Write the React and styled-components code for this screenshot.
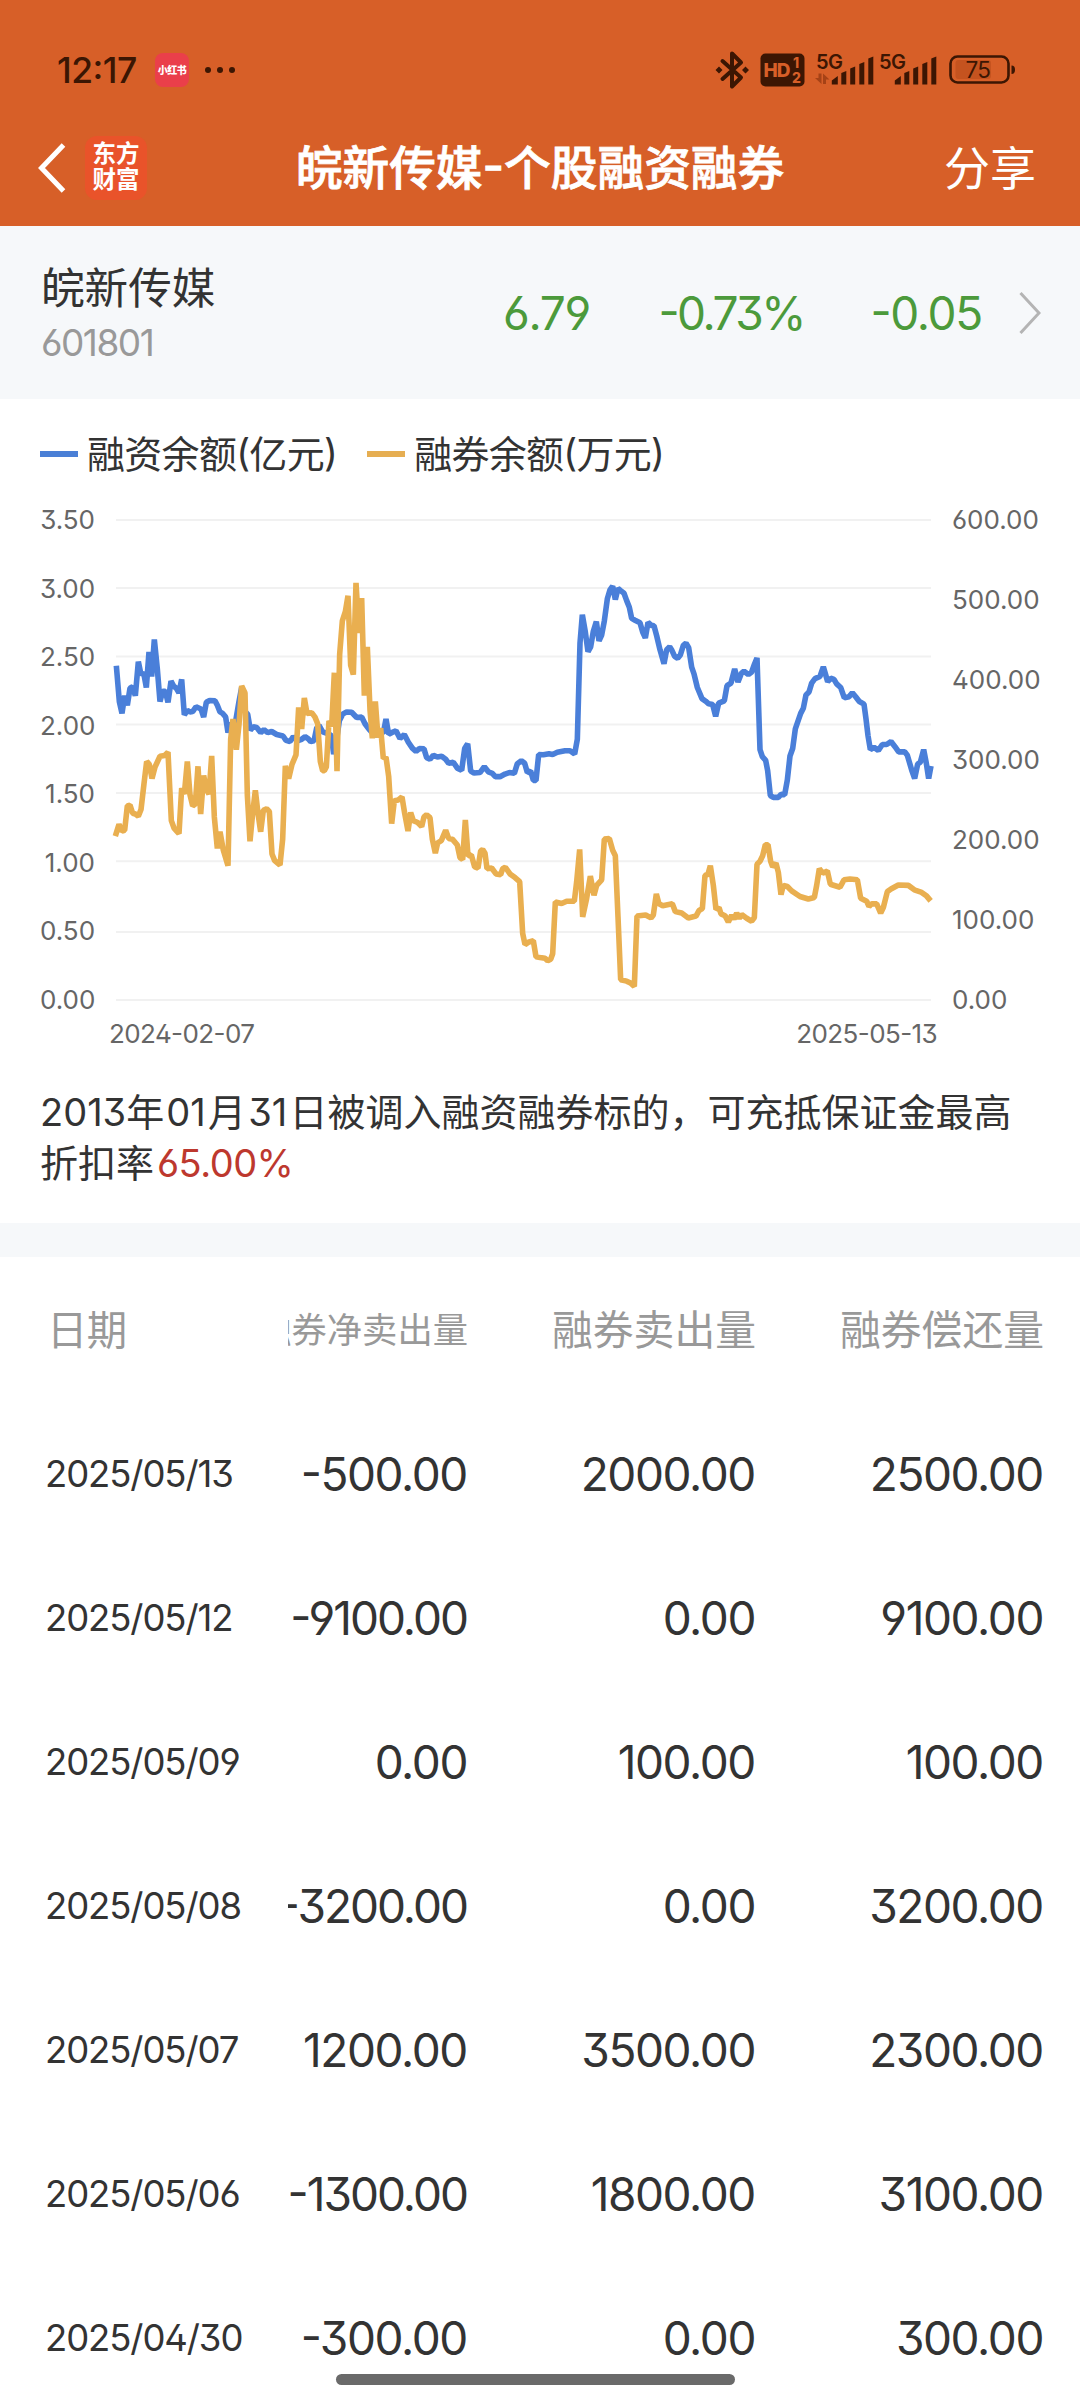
import styled, { createGlobalStyle } from "styled-components";

const GlobalStyle = createGlobalStyle`
  * {
    box-sizing: border-box;
  }
  body {
    margin: 0;
    background-color: #fff;
    color: #333;
    font-family: Inter, "Noto Sans CJK SC", sans-serif;
    font-feature-settings: "ss01", "cv09", "case";
  }
  svg {
    display: block;
    flex: none;
  }
`;
const Page = styled.div`
  width: 1080px;
  height: 2400px;
  overflow: hidden;
  position: relative;
`;
const Header = styled.header`
  height: 226px;
  background-color: #d75f28;
`;
const StatusBar = styled.div`
  height: 120px;
  padding: 20px 64px 0 57px;
  display: flex;
  align-items: center;
  color: #3c1603;
`;
const Time = styled.span`
  width: 98px;
  font-size: 35.5px;
  font-weight: 500;
  letter-spacing: -0.5px;
`;
const RedApp = styled.span`
  width: 34px;
  height: 34px;
  border-radius: 8px;
  background-color: #ea3f4a;
  color: #fff;
  font-size: 10px;
  font-weight: 900;
  line-height: 34px;
  letter-spacing: -0.5px;
  text-align: center;
  white-space: nowrap;
`;
const Dots = styled.div`
  margin-left: 16px;
  display: flex;
  gap: 6px;
  i {
    width: 6px;
    height: 6px;
    border-radius: 50%;
    background-color: #3c1603;
  }
`;
const StatusIcons = styled.div`
  margin-left: auto;
  display: flex;
  text {
    font-family: Inter, sans-serif;
  }
`;
const NavBar = styled.div`
  height: 106px;
  padding: 0 44px 10px 38px;
  display: grid;
  grid-template-columns: 220px 1fr 214px;
  align-items: center;
  color: #fff;
`;
const NavLeft = styled.div`
  display: flex;
  align-items: center;
  gap: 19px;
`;
const Logo = styled.div`
  width: 62px;
  height: 64px;
  padding-top: 5px;
  border-radius: 12px;
  background-color: #e9532a;
  font-size: 23.5px;
  font-weight: 700;
  line-height: 26px;
  text-align: center;
`;
const Title = styled.h1`
  margin: 0;
  font-size: 46.7px;
  font-weight: 500;
  line-height: 60px;
  text-align: center;
  white-space: nowrap;
  -webkit-text-stroke: 0.8px #fff;
`;
const Share = styled.span`
  font-size: 46px;
  line-height: 60px;
  text-align: right;
`;
const Quote = styled.section`
  height: 173px;
  padding: 0 39px 0 41px;
  background-color: #f6f8fa;
  display: grid;
  grid-template-columns: 349px 200px 214px 178px 1fr;
  align-items: center;
`;
const StockName = styled.div`
  margin-top: 7px;
  font-size: 43.6px;
  line-height: 54px;
`;
const StockCode = styled.div`
  font-size: 37px;
  line-height: 54px;
  letter-spacing: -1.5px;
  color: #999;
`;
const QuoteValue = styled.span`
  font-size: 46px;
  text-align: right;
  letter-spacing: ${(props) => (props.tight ? "-2.5px" : "-1.3px")};
  color: #4c9a3b;
`;
const ChevronCell = styled.div`
  display: flex;
  justify-content: flex-end;
`;
const ChartSection = styled.section`
  height: 661px;
  padding: 28px 40px 0;
`;
const Legend = styled.div`
  height: 54px;
  display: flex;
  gap: 30px;
`;
const LegendItem = styled.div`
  display: flex;
  align-items: center;
  font-size: 38px;
  line-height: 54px;
  letter-spacing: -0.7px;
  &::before {
    content: "";
    width: 38px;
    height: 6px;
    margin-right: 9px;
    background-color: ${(props) => props.color};
  }
`;
const ChartBody = styled.div`
  margin-top: 23px;
  display: grid;
  grid-template-columns: 55px 815px 1fr;
  column-gap: 21px;
`;
const Axis = styled.div`
  height: 512px;
  display: flex;
  flex-direction: column;
  justify-content: space-between;
  text-align: ${(props) => props.align};
  font-size: 26px;
  line-height: 32px;
  color: #666;
`;
const Plot = styled.svg`
  margin-top: 16px;
  overflow: visible;
`;
const Dates = styled.div`
  margin-top: 2px;
  padding: 0 103px 0 69px;
  display: flex;
  justify-content: space-between;
  font-size: 26px;
  line-height: 32px;
  letter-spacing: -0.6px;
  color: #666;
`;
const Notice = styled.p`
  height: 163px;
  margin: 0;
  padding: 27px 40px 0;
  font-size: 38px;
  line-height: 51px;
  em {
    margin-left: 3px;
    font-style: normal;
    letter-spacing: -0.5px;
    color: #bd382e;
  }
`;
const Num = styled.span`
  margin: 0 2.2px;
`;
const Divider = styled.div`
  height: 34px;
  background-color: #f6f8fa;
`;
const Row = styled.div`
  height: 144px;
  display: grid;
  grid-template-columns: 288px 180px 288px 288px;
  align-items: center;
`;
const HeadRow = styled(Row)`
  height: 145px;
  padding-bottom: 5px;
`;
const DateCell = styled.span`
  padding-left: 45px;
  font-size: 36.5px;
  letter-spacing: -1.1px;
`;
const Cell = styled.span`
  display: flex;
  justify-content: flex-end;
  overflow: hidden;
  white-space: nowrap;
  padding-right: 1px;
  font-size: 46px;
  letter-spacing: ${(props) => (props.long ? "-2px" : "-1.4px")};
`;
const HeadCell = styled(Cell)`
  padding-right: 0;
  font-size: ${(props) => (props.small ? "35.3px" : "40.8px")};
  letter-spacing: 0;
  color: #999;
`;
const HeadDate = styled(DateCell)`
  padding-left: 47px;
  font-size: 40.4px;
  letter-spacing: -0.6px;
  color: #999;
`;
const HomeIndicator = styled.div`
  position: absolute;
  left: 336px;
  bottom: 15px;
  width: 399px;
  height: 11px;
  border-radius: 6px;
  background-color: #6a6a6a;
`;

const rows = [
  ["2025/05/13", "-500.00", "2000.00", "2500.00"],
  ["2025/05/12", "-9100.00", "0.00", "9100.00"],
  ["2025/05/09", "0.00", "100.00", "100.00"],
  ["2025/05/08", "-3200.00", "0.00", "3200.00"],
  ["2025/05/07", "1200.00", "3500.00", "2300.00"],
  ["2025/05/06", "-1300.00", "1800.00", "3100.00"],
  ["2025/04/30", "-300.00", "0.00", "300.00"],
];
const leftTicks = [3.5, 3, 2.5, 2, 1.5, 1, 0.5, 0];
const rightTicks = [600, 500, 400, 300, 200, 100, 0];
const gridLines = [107, 291, 476, 660, 845, 1030, 1221, 1405];

// each series is kept in three strips: [x offset, points inside the strip]
const financing = [
  [
    0,
    "349,501 358,598 366,630 374,582 382,608 390,562 398,558 406,582 415,490 423,525 431,520 439,560 447,464 455,530 463,430 472,510 480,598 488,570 496,570 504,600 513,543 521,556 529,562 537,574 545,538 553,634 562,622 570,626 578,625 588,612 603,618 611,640 619,600 629,595 645,596 652,608 660,626 668,630 677,640 684,682 692,655 700,690 709,640 717,598 725,560 735,625 743,632 751,675 760,666 770,668 782,682 792,674 803,682 815,679 830,687 849,691 858,703 870,706 880,693 892,704 905,700 915,693 925,699 932,706 942,704 950,670 957,662 968,680 985,685 994,690 1001,740 1010,700 1018,650 1028,632 1040,626 1055,627 1070,641 1085,640 1095,658 1108,674 1125,690 1140,680 1150,683",
  ],
  [
    1140,
    "18,645 26,686 35,682 48,677 60,698 73,687 85,708 97,724 108,733 118,725 132,726 140,750 150,754 160,743 172,748 185,746 197,754 206,765 220,762 232,778 245,784 254,725 263,712 272,786 282,791 300,790 313,774 325,788 337,792 346,801 360,801 375,794 388,790 403,792 412,766 424,758 434,765 442,790 452,786 460,811 468,811 476,741 490,742 507,739 518,741 532,735 555,731 570,731 584,740 592,700 600,440 607,363 616,410 624,463 632,450 640,408 649,382 657,434 665,418 673,380 682,320 690,296 698,286 706,322 714,292 722,298 732,305 740,325 748,343 755,373 765,378 780,385 788,410 796,426 804,384 814,392 822,393 830,420 840,458 852,496 860,458 869,450 876,460 884,476 893,481 901,472 910,446 918,440 926,452 935,505 942,523 952,560 966,590 977,597 986,604 998,606 1007,638 1016,602 1033,596 1041,555 1053,548",
  ],
  [
    2100,
    "104,510 114,545 124,522 132,516 145,525 155,518 162,500 171,480 180,728 187,747 197,757 203,785 211,852 220,857 235,857 243,849 254,850 262,810 270,745 278,725 286,672 302,630 310,616 318,580 327,572 335,548 345,536 360,530 370,504 383,544 392,535 402,538 410,550 422,560 433,588 447,585 457,574 467,585 478,598 492,605 498,645 504,690 511,728 522,722 535,730 547,714 560,714 573,706 585,720 596,734 614,734 622,743 635,783 644,806 653,767 661,762 671,728 679,765 686,806 693,772",
  ],
];
const lending = [
  [
    0,
    "346,962 357,930 366,948 374,946 382,880 390,878 398,900 406,902 415,908 423,890 432,820 440,760 448,768 456,806 465,775 480,746 494,744 504,735 514,920 522,940 530,948 537,955 545,832 553,848 562,760 570,850 578,880 586,875 594,773 602,902 611,798 619,835 627,848 635,745 643,910 652,995 660,950 670,1000 684,1042 692,700 699,645 709,728 717,660 725,556 735,575 742,850 750,976 758,900 766,838 774,900 782,950 790,892 800,888 808,895 816,1010 824,1028 840,1040 848,970 856,772 866,806 876,768 888,742 896,614 905,672 913,588 921,630 935,628 945,640 953,658 961,760 968,785 973,785 979,775 987,650 995,665 1003,520 1011,786 1019,470 1027,380 1036,355 1044,312 1052,500 1060,525 1068,277 1077,413 1085,318 1093,582 1102,450 1110,620 1117,697 1126,598 1134,695 1142,670 1150,752 1158,748 1166,800",
  ],
  [
    1140,
    "35,928 43,866 55,864 66,856 74,900 84,948 92,898 100,920 113,925 125,936 132,910 140,904 150,912 157,970 166,1008 173,980 184,974 197,946 206,968 217,970 232,986 240,1020 248,1025 256,918 264,1015 274,1013 284,1045 294,1048 302,1002 308,998 315,1008 321,1050 335,1048 348,1064 362,1066 368,1050 376,1046 390,1064 405,1074 419,1085 428,1225 435,1255 447,1248 460,1245 468,1288 480,1290 495,1292 503,1299 512,1295 518,1280 526,1140 545,1144 560,1138 583,1138 590,1085 599,998 608,1180 620,1130 631,1070 642,1122 650,1095 665,1080 673,970 688,968 698,1000 706,1015 714,1180 722,1350 740,1354 753,1360 763,1368 771,1178 797,1175 813,1183 820,1175 829,1118 837,1145 848,1150 877,1145 886,1166 905,1170 925,1183 948,1178 957,1163 967,1158 975,1068 984,1065 991,1042 1000,1095 1008,1160",
  ],
  [
    2100,
    "57,1155 63,1172 75,1177 85,1194 95,1176 102,1186 110,1170 118,1184 125,1174 140,1184 155,1192 163,1182 171,1038 180,1030 188,1015 196,985 204,985 212,1030 218,1045 228,1035 235,1060 243,1120 250,1095 262,1098 275,1110 300,1125 325,1132 343,1128 350,1095 358,1050 368,1062 382,1056 391,1092 420,1100 432,1080 450,1078 472,1080 482,1130 500,1138 507,1152 515,1145 530,1145 542,1170 550,1155 562,1112 573,1105 595,1094 625,1095 645,1108 665,1114 680,1124 692,1137",
  ],
];
const toPoints = (strips) =>
  strips
    .map(([offset, points]) =>
      points
        .split(" ")
        .map((point) => {
          const [x, y] = point.split(",").map(Number);
          return `${x + offset},${y}`;
        })
        .join(" ")
    )
    .join(" ");

function Series({ strips, color }) {
  return (
    <polyline
      points={toPoints(strips)}
      fill="none"
      stroke={color}
      strokeWidth="5.6"
      strokeLinejoin="bevel"
      vectorEffect="non-scaling-stroke"
    />
  );
}

function Signal({ arrows }) {
  return (
    <svg width={63} height="40" viewBox="814 50 63 40" fill="#3c1603">
      <text x="816" y="68.5" fontSize="20" fontWeight="600" letterSpacing="-0.6">
        5G
      </text>
      {arrows && (
        <g fill="#a64216">
          <path d="M818.5 73.500h3V84L815 78h3.500z" />
          <path d="M826 84h-3V73.500l6.500 6H826z" />
        </g>
      )}
      <path d="M831.800 84.500v-4l6-4.500v8.500z" />
      <path d="M841.300 84.500V73l5-2v13.500z" />
      <path d="M850.200 84.500V68.500l5-2v18z" />
      <path d="M859.300 84.500V64l5-2v22.500z" />
      <path d="M868.300 84.500V58.500l5-2v28z" />
    </svg>
  );
}

function App() {
  return (
    <Page>
      <GlobalStyle />
      <Header>
        <StatusBar>
          <Time>12:17</Time>
          <RedApp>小红书</RedApp>
          <Dots>
            <i />
            <i />
            <i />
          </Dots>
          <StatusIcons>
            <svg width="45" height="40" viewBox="715 50 45 40" fill="#3c1603">
              <path
                d="M722.500 61l18.500 16.500-9 9V53.500l9 9-18.500 16.500"
                fill="none"
                stroke="#3c1603"
                strokeWidth="4"
                strokeLinejoin="round"
                strokeLinecap="round"
              />
              <path d="M715.500 70l3.500-3.500 3.500 3.500-3.500 3.500zM742 70l3.500-3.500 3.500 3.500-3.500 3.500z" />
            </svg>
            <svg width="54" height="40" viewBox="760 50 54 40">
              <rect x="760.500" y="53.500" width="44" height="33" rx="5" fill="#3c1603" />
              <g fill="#d75f28" fontWeight="800">
                <text x="763.500" y="76.500" fontSize="19" letterSpacing="-1">
                  HD
                </text>
                <text x="793" y="68" fontSize="14">
                  1
                </text>
                <text x="792" y="83" fontSize="14">
                  2
                </text>
              </g>
            </svg>
            <Signal arrows />
            <Signal />
            <svg width="76" height="40" viewBox="940 50 76 40">
              <rect x="955.500" y="60" width="35.500" height="19" rx="3" fill="#c5531f" />
              <rect
                x="950.500"
                y="56.500"
                width="58"
                height="26"
                rx="7"
                fill="none"
                stroke="#3c1603"
                strokeWidth="2.600"
              />
              <path d="M1011.500 65.500q3.500 0 3.500 4.200t-3.500 4.200z" fill="#3c1603" />
              <text x="965.500" y="78" fontSize="22.500" fill="#3c1603" letterSpacing="-0.8">
                75
              </text>
            </svg>
          </StatusIcons>
        </StatusBar>
        <NavBar>
          <NavLeft>
            <svg width="28" height="50" viewBox="0 0 28 50">
              <path d="M25.500 2L3.500 25l22 23" fill="none" stroke="#fff" strokeWidth="5" />
            </svg>
            <Logo>
              东方
              <br />
              财富
            </Logo>
          </NavLeft>
          <Title>皖新传媒-个股融资融券</Title>
          <Share>分享</Share>
        </NavBar>
      </Header>
      <Quote>
        <div>
          <StockName>皖新传媒</StockName>
          <StockCode>601801</StockCode>
        </div>
        <QuoteValue>6.79</QuoteValue>
        <QuoteValue tight>-0.73%</QuoteValue>
        <QuoteValue>-0.05</QuoteValue>
        <ChevronCell>
          <svg width="22" height="44" viewBox="0 0 22 44">
            <path d="M1.500 2L20 22 1.500 42" fill="none" stroke="#b4b4b4" strokeWidth="3" />
          </svg>
        </ChevronCell>
      </Quote>
      <ChartSection>
        <Legend>
          <LegendItem color="#4a7fd6">融资余额(亿元)</LegendItem>
          <LegendItem color="#e6ae52">融券余额(万元)</LegendItem>
        </Legend>
        <ChartBody>
          <Axis align="right">
            {leftTicks.map((tick) => (
              <span key={tick}>{tick.toFixed(2)}</span>
            ))}
          </Axis>
          <Plot
            width="815"
            height="480"
            viewBox="348 107 2445 1298"
            preserveAspectRatio="none"
          >
            {gridLines.map((y) => (
              <line
                key={y}
                x1="348"
                x2="2793"
                y1={y}
                y2={y}
                stroke="#f1f1f1"
                strokeWidth="2"
                vectorEffect="non-scaling-stroke"
              />
            ))}
            <Series strips={financing} color="#4a7fd9" />
            <Series strips={lending} color="#e9af50" />
          </Plot>
          <Axis align="left">
            {rightTicks.map((tick) => (
              <span key={tick}>{tick.toFixed(2)}</span>
            ))}
          </Axis>
        </ChartBody>
        <Dates>
          <span>2024-02-07</span>
          <span>2025-05-13</span>
        </Dates>
      </ChartSection>
      <Notice>
        2013年<Num>01</Num>月<Num>31</Num>
        日被调入融资融券标的，可充抵保证金最高折扣率<em>65.00%</em>
      </Notice>
      <Divider />
      <HeadRow>
        <HeadDate>日期</HeadDate>
        <HeadCell small>融券净卖出量</HeadCell>
        <HeadCell>融券卖出量</HeadCell>
        <HeadCell>融券偿还量</HeadCell>
      </HeadRow>
      {rows.map(([date, ...values]) => (
        <Row key={date}>
          <DateCell>{date}</DateCell>
          {values.map((value, i) => (
            <Cell key={i} long={value.length > 7}>
              {value}
            </Cell>
          ))}
        </Row>
      ))}
      <HomeIndicator />
    </Page>
  );
}

export default App;
